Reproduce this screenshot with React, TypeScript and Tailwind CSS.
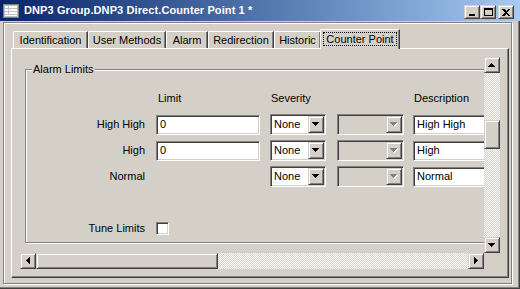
import React from "react";

const raised =
  "border border-t-[#d4d0c8] border-l-[#d4d0c8] border-r-[#404040] border-b-[#404040] shadow-[inset_1px_1px_0_#ffffff,inset_-1px_-1px_0_#808080] bg-[#d4d0c8]";
const sunken =
  "border border-t-[#808080] border-l-[#808080] border-r-[#ffffff] border-b-[#ffffff] shadow-[inset_1px_1px_0_#404040,inset_-1px_-1px_0_#d4d0c8]";
const track =
  "bg-[image:repeating-conic-gradient(#ffffff_0%_25%,#d4d0c8_0%_50%)] bg-[length:2px_2px]";

function Arrow({ dir, grey = false }: { dir: "up" | "down" | "left" | "right"; grey?: boolean }) {
  const fill = grey ? "#808080" : "#000000";
  if (dir === "down" || dir === "up") {
    const pts = dir === "down" ? "0,0 7,0 3.5,4" : "0,4 7,4 3.5,0";
    return (
      <svg width="8" height="5" viewBox="0 0 8 5" shapeRendering="crispEdges">
        {grey && <polygon points="1,1 8,1 4.5,5" fill="#ffffff" />}
        <polygon points={pts} fill={fill} />
      </svg>
    );
  }
  const pts = dir === "left" ? "4,0 4,7 0,3.5" : "0,0 0,7 4,3.5";
  return (
    <svg width="5" height="8" viewBox="0 0 5 8" shapeRendering="crispEdges">
      <polygon points={pts} fill={fill} />
    </svg>
  );
}

function TitleBar() {
  return (
    <div className="h-[21px] flex items-center bg-gradient-to-r from-[#0a246a] to-[#a6caf0]">
      <svg width="16" height="16" viewBox="0 0 16 16" className="ml-[3px]" shapeRendering="crispEdges">
        <rect x="0" y="1" width="16" height="14" fill="#808080" />
        <rect x="1" y="2" width="14" height="12" fill="#c0c0c0" />
        <rect x="2" y="3" width="3" height="2" fill="#ffffff" />
        <rect x="6" y="3" width="8" height="2" fill="#ffffff" />
        <rect x="2" y="6" width="3" height="2" fill="#ffffff" />
        <rect x="6" y="6" width="8" height="2" fill="#ffffff" />
        <rect x="2" y="9" width="3" height="2" fill="#ffffff" />
        <rect x="6" y="9" width="8" height="2" fill="#ffffff" />
        <rect x="2" y="12" width="12" height="1" fill="#ffffff" />
      </svg>
      <span className="ml-[5px] text-white font-bold text-[11px] leading-[13px] tracking-[0.1px]">
        DNP3 Group.DNP3 Direct.Counter Point 1 *
      </span>
      <div className="ml-auto mr-[6px] self-end mb-[2px] flex">
        <div className={`${raised} w-[16px] h-[14px] flex items-end justify-center pb-[2px]`}>
          <div className="w-[6px] h-[2px] bg-black" />
        </div>
        <div className={`${raised} w-[16px] h-[14px] flex items-center justify-center`}>
          <div className="w-[9px] h-[8px] border border-black border-t-2" />
        </div>
        <div className={`${raised} ml-[2px] w-[16px] h-[14px] flex items-center justify-center`}>
          <svg width="8" height="7" viewBox="0 0 8 7" shapeRendering="crispEdges">
            <path d="M0 0h2l2 2 2-2h2L5 3.5 8 7H6L4 5 2 7H0l3-3.5z" fill="#000" />
          </svg>
        </div>
      </div>
    </div>
  );
}

const tabs = ["Identification", "User Methods", "Alarm", "Redirection", "Historic"];
const tabWidths = ["w-[75px]", "w-[78px]", "w-[42px]", "w-[66px]", "w-[47px]"];

function Tabs() {
  return (
    <div className="flex items-end h-[19px] pl-[2px]">
      {tabs.map((t, i) => (
        <div
          key={t}
          className={`${tabWidths[i]} h-[17px] border-l border-t border-l-[#ffffff] border-t-[#ffffff] border-r border-r-[#404040] shadow-[inset_-1px_0_0_#808080] rounded-tl-[2px] flex items-center justify-center pt-[1px] leading-[13px]`}
        >
          {t}
        </div>
      ))}
      <div className="relative z-10 -mb-[1px] -ml-[1px] w-[80px] h-[20px] bg-[#d4d0c8] border-l border-t border-l-[#ffffff] border-t-[#ffffff] border-r border-r-[#404040] shadow-[inset_-1px_0_0_#808080] rounded-tl-[2px] p-[2px] pb-[3px]">
        <div className="h-full border border-dotted border-black flex items-center justify-center leading-[13px]">
          Counter Point
        </div>
      </div>
    </div>
  );
}

function TextBox({ value, w }: { value: string; w: string }) {
  return (
    <div className={`${sunken} ${w} h-[20px] bg-white flex items-center pl-[3px] leading-[13px] whitespace-nowrap overflow-hidden`}>
      {value}
    </div>
  );
}

function Combo({ value, disabled = false }: { value?: string; disabled?: boolean }) {
  return (
    <div
      className={`${sunken} ${disabled ? "w-[67px] bg-[#d4d0c8]" : "w-[56px] bg-white"} h-[21px] p-[1px] flex items-stretch`}
    >
      <div className="flex-1 flex items-center pl-[2px] leading-[13px]">{value}</div>
      <div className={`${raised} w-[16px] flex items-center justify-center`}>
        <Arrow dir="down" grey={disabled} />
      </div>
    </div>
  );
}

function Row({ label, limit, desc }: { label: string; limit?: string; desc: string }) {
  return (
    <div className="flex items-center h-[21px] mt-[5px] first:mt-0">
      <div className="w-[119px] text-right mr-[11px]">{label}</div>
      <div className="w-[104px] mr-[10px]">{limit !== undefined && <TextBox value={limit} w="w-[104px]" />}</div>
      <div className="mr-[11px]">
        <Combo value="None" />
      </div>
      <div className="mr-[9px]">
        <Combo disabled />
      </div>
      <TextBox value={desc} w="w-[120px]" />
    </div>
  );
}

function AlarmLimits() {
  return (
    <div className="ml-[5px] mt-[12px] relative w-[620px] h-[174px] border border-[#808080] shadow-[inset_1px_1px_0_#ffffff,1px_1px_0_#ffffff]">
      <div className="absolute left-[6px] -top-[7px] px-[1px] bg-[#d4d0c8] leading-[13px]">Alarm Limits</div>
      <div className="flex leading-[13px] pt-[22px]">
        <div className="w-[132px]" />
        <div className="w-[113px]">Limit</div>
        <div className="w-[143px]">Severity</div>
        <div>Description</div>
      </div>
      <div className="mt-[9px]">
        <Row label="High High" limit="0" desc="High High" />
        <Row label="High" limit="0" desc="High" />
        <Row label="Normal" desc="Normal" />
      </div>
      <div className="flex items-center mt-[35px] h-[13px]">
        <div className="w-[119px] text-right mr-[11px]">Tune Limits</div>
        <div className={`${sunken} w-[13px] h-[13px] bg-white`} />
      </div>
    </div>
  );
}

function ScrollView() {
  return (
    <div className="w-[480px] h-[212px] grid grid-cols-[464px_16px] grid-rows-[196px_16px]">
      <div className="overflow-hidden">
        <AlarmLimits />
      </div>
      <div className="flex flex-col">
        <div className={`${raised} h-[16px] flex items-center justify-center`}>
          <Arrow dir="up" />
        </div>
        <div className={`${track} h-[47px]`} />
        <div className={`${raised} h-[29px]`} />
        <div className={`${track} flex-1`} />
        <div className={`${raised} h-[16px] flex items-center justify-center`}>
          <Arrow dir="down" />
        </div>
      </div>
      <div className="flex">
        <div className={`${raised} w-[16px] flex items-center justify-center`}>
          <Arrow dir="left" />
        </div>
        <div className={`${raised} w-[182px]`} />
        <div className={`${track} flex-1`} />
        <div className={`${raised} w-[16px] flex items-center justify-center`}>
          <Arrow dir="right" />
        </div>
      </div>
      <div className="bg-[#d4d0c8]" />
    </div>
  );
}

export default function App() {
  return (
    <div className="w-[520px] h-[289px] overflow-hidden bg-[#d4d0c8] text-black text-[11px] font-['Liberation_Sans',Arial,sans-serif] shadow-[inset_-1px_-1px_0_#404040,inset_-2px_-2px_0_#808080]">
      <TitleBar />
      <div className="ml-[3px] mt-[1px] w-[509px] h-[262px] border border-[#808080] shadow-[inset_1px_1px_0_#ffffff,1px_1px_0_#ffffff]">
        <div className="pl-[7px] pt-[6px]">
          <Tabs />
          <div className="w-[498px] h-[230px] border border-t-[#ffffff] border-l-[#ffffff] border-r-[#404040] border-b-[#404040] shadow-[inset_-1px_-1px_0_#808080] p-[8px]">
            <ScrollView />
          </div>
        </div>
      </div>
    </div>
  );
}
